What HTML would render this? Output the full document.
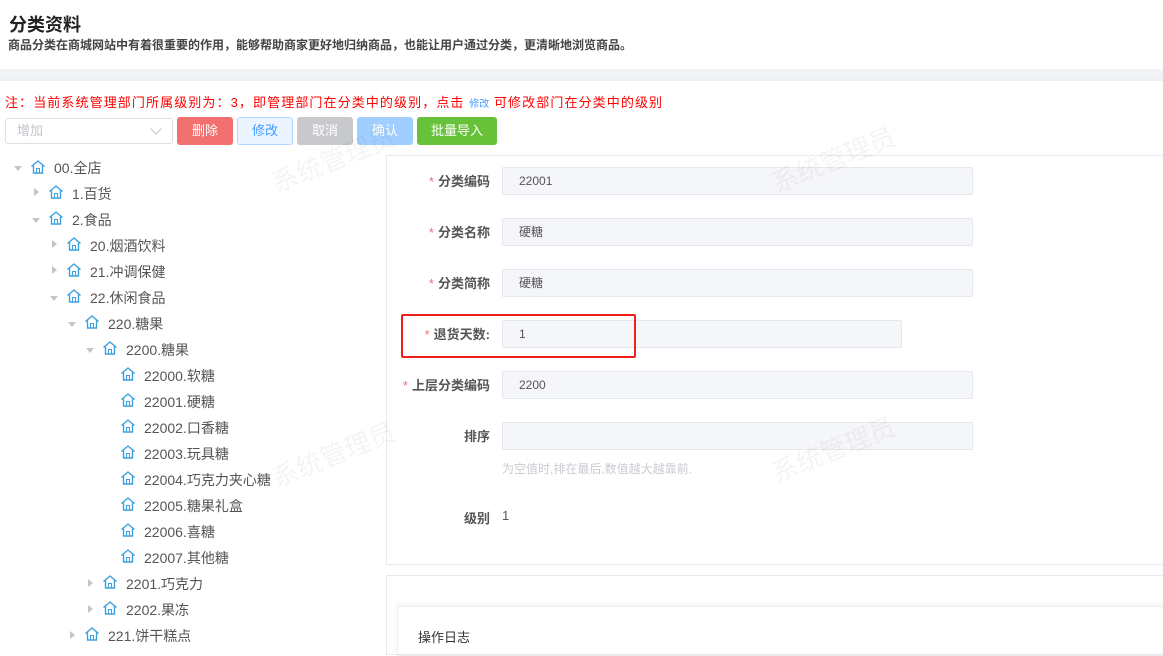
<!DOCTYPE html>
<html><head><meta charset="utf-8"><style>
*{margin:0;padding:0;box-sizing:border-box}
body{width:1163px;height:648px;overflow:hidden;background:#fff;font-family:"Liberation Sans","Noto Sans CJK SC",sans-serif;color:#333;position:relative}
.a{position:absolute;white-space:nowrap}
.btn{position:absolute;top:117px;height:28px;border-radius:3px;font-size:13px;color:#fff;text-align:center;line-height:28px}
.ti{position:absolute;font-size:14px;color:#555;height:20px;line-height:20px}
.ar{position:absolute;width:0;height:0;border-top:4px solid transparent;border-bottom:4px solid transparent;border-left:5px solid #c0c4cc}
.ad{position:absolute;width:0;height:0;border-left:4px solid transparent;border-right:4px solid transparent;border-top:5px solid #c0c4cc}
.ic{position:absolute;width:16px;height:16px}
.lb{position:absolute;font-size:13px;font-weight:bold;color:#555;text-align:right;width:120px;left:370px}
.lb i{color:#f56c6c;font-style:normal;font-weight:normal;margin-right:4px}
.in{position:absolute;left:502px;width:471px;height:28px;background:#f5f6fa;border:1px solid #e4e7ed;border-radius:2px;font-size:12px;color:#555;padding-left:16px;line-height:26px}
.wm{position:absolute;font-size:26px;color:rgba(0,0,0,0.045);transform:rotate(-22deg);white-space:nowrap}
</style></head><body>
<div class="a" style="left:9px;top:11px;font-size:18px;font-weight:bold;color:#222">分类资料</div>
<div class="a" style="left:8px;top:36px;font-size:12px;font-weight:bold;color:#444">商品分类在商城网站中有着很重要的作用，能够帮助商家更好地归纳商品，也能让用户通过分类，更清晰地浏览商品。</div>
<div class="a" style="left:0;top:69px;width:1163px;height:12px;background:linear-gradient(#f3f4f6,#eef0f3)"></div>
<div class="a" style="left:5px;top:92px;font-size:13px;color:#f00;letter-spacing:1.1px">注：当前系统管理部门所属级别为：3，即管理部门在分类中的级别，点击 <span style="color:#409eff;font-size:10px;letter-spacing:0">修改</span> 可修改部门在分类中的级别</div>
<div class="a" style="left:5px;top:118px;width:168px;height:26px;border:1px solid #dcdfe6;border-radius:3px;font-size:13px;color:#c0c4cc;padding-left:11px;line-height:24px">增加<span style="position:absolute;right:12px;top:6px;width:8px;height:8px;border-right:1px solid #c0c4cc;border-bottom:1px solid #c0c4cc;transform:rotate(45deg)"></span></div>
<div class="btn" style="left:177px;width:56px;background:#f37070">删除</div>
<div class="btn" style="left:237px;width:56px;background:#ecf5ff;border:1px solid #b3d8ff;color:#409eff;line-height:26px">修改</div>
<div class="btn" style="left:297px;width:56px;background:#c8c9cc">取消</div>
<div class="btn" style="left:357px;width:56px;background:#a0cfff">确认</div>
<div class="btn" style="left:417px;width:80px;background:#67c23a">批量导入</div>

<svg width="0" height="0" style="position:absolute"><defs><g id="h"><path d="M1.5 7.5 L8 2 L14.5 7.5 M3.5 6.5 V14 H12.5 V6.5" fill="none" stroke="#3aa0e0" stroke-width="1.4"/><rect x="6.5" y="9.5" width="3" height="4.5" fill="none" stroke="#3aa0e0" stroke-width="1"/></g></defs></svg>

<div class="ad" style="left:14px;top:166px"></div><svg class="ic" style="left:30px;top:159px"><use href="#h"/></svg><div class="ti" style="left:54px;top:158px">00.全店</div>
<div class="ar" style="left:34px;top:188px"></div><svg class="ic" style="left:48px;top:184px"><use href="#h"/></svg><div class="ti" style="left:72px;top:184px">1.百货</div>
<div class="ad" style="left:32px;top:218px"></div><svg class="ic" style="left:48px;top:210px"><use href="#h"/></svg><div class="ti" style="left:72px;top:210px">2.食品</div>
<div class="ar" style="left:52px;top:240px"></div><svg class="ic" style="left:66px;top:236px"><use href="#h"/></svg><div class="ti" style="left:90px;top:236px">20.烟酒饮料</div>
<div class="ar" style="left:52px;top:266px"></div><svg class="ic" style="left:66px;top:262px"><use href="#h"/></svg><div class="ti" style="left:90px;top:262px">21.冲调保健</div>
<div class="ad" style="left:50px;top:296px"></div><svg class="ic" style="left:66px;top:288px"><use href="#h"/></svg><div class="ti" style="left:90px;top:288px">22.休闲食品</div>
<div class="ad" style="left:68px;top:322px"></div><svg class="ic" style="left:84px;top:314px"><use href="#h"/></svg><div class="ti" style="left:108px;top:314px">220.糖果</div>
<div class="ad" style="left:86px;top:348px"></div><svg class="ic" style="left:102px;top:340px"><use href="#h"/></svg><div class="ti" style="left:126px;top:340px">2200.糖果</div>
<svg class="ic" style="left:120px;top:366px"><use href="#h"/></svg><div class="ti" style="left:144px;top:366px">22000.软糖</div>
<svg class="ic" style="left:120px;top:392px"><use href="#h"/></svg><div class="ti" style="left:144px;top:392px">22001.硬糖</div>
<svg class="ic" style="left:120px;top:418px"><use href="#h"/></svg><div class="ti" style="left:144px;top:418px">22002.口香糖</div>
<svg class="ic" style="left:120px;top:444px"><use href="#h"/></svg><div class="ti" style="left:144px;top:444px">22003.玩具糖</div>
<svg class="ic" style="left:120px;top:470px"><use href="#h"/></svg><div class="ti" style="left:144px;top:470px">22004.巧克力夹心糖</div>
<svg class="ic" style="left:120px;top:496px"><use href="#h"/></svg><div class="ti" style="left:144px;top:496px">22005.糖果礼盒</div>
<svg class="ic" style="left:120px;top:522px"><use href="#h"/></svg><div class="ti" style="left:144px;top:522px">22006.喜糖</div>
<svg class="ic" style="left:120px;top:548px"><use href="#h"/></svg><div class="ti" style="left:144px;top:548px">22007.其他糖</div>
<div class="ar" style="left:88px;top:579px"></div><svg class="ic" style="left:102px;top:574px"><use href="#h"/></svg><div class="ti" style="left:126px;top:574px">2201.巧克力</div>
<div class="ar" style="left:88px;top:605px"></div><svg class="ic" style="left:102px;top:600px"><use href="#h"/></svg><div class="ti" style="left:126px;top:600px">2202.果冻</div>
<div class="ar" style="left:70px;top:631px"></div><svg class="ic" style="left:84px;top:626px"><use href="#h"/></svg><div class="ti" style="left:108px;top:626px">221.饼干糕点</div>

<div class="a" style="left:386px;top:155px;width:790px;height:410px;border:1px solid #e6e9ef"></div>
<div class="lb" style="top:171px"><i>*</i>分类编码</div><div class="in" style="top:167px">22001</div>
<div class="lb" style="top:222px"><i>*</i>分类名称</div><div class="in" style="top:218px">硬糖</div>
<div class="lb" style="top:273px"><i>*</i>分类简称</div><div class="in" style="top:269px">硬糖</div>
<div class="lb" style="top:324px"><i>*</i>退货天数:</div><div class="in" style="top:320px;width:400px">1</div>
<div class="a" style="left:401px;top:314px;width:235px;height:44px;border:2px solid #f0201a;border-radius:2px"></div>
<div class="lb" style="top:375px"><i>*</i>上层分类编码</div><div class="in" style="top:371px">2200</div>
<div class="lb" style="top:426px">排序</div><div class="in" style="top:422px"></div>
<div class="a" style="left:502px;top:460px;font-size:12px;color:#c8cbd0">为空值时,排在最后,数值越大越靠前.</div>
<div class="lb" style="top:508px">级别</div><div class="a" style="left:502px;top:508px;font-size:13px;color:#555">1</div>
<div class="a" style="left:386px;top:575px;width:790px;height:80px;border:1px solid #e6e9ef"></div>
<div class="a" style="left:397px;top:606px;width:780px;height:50px;border:1px solid #eceef2;box-shadow:0 -2px 6px rgba(0,0,0,0.05)"></div>
<div class="a" style="left:418px;top:627px;font-size:13px;color:#333">操作日志</div>

<div class="wm" style="left:268px;top:140px">系统管理员</div>
<div class="wm" style="left:768px;top:140px">系统管理员</div>
<div class="wm" style="left:268px;top:435px">系统管理员</div>
<div class="wm" style="left:768px;top:430px">系统管理员</div>
</body></html>
